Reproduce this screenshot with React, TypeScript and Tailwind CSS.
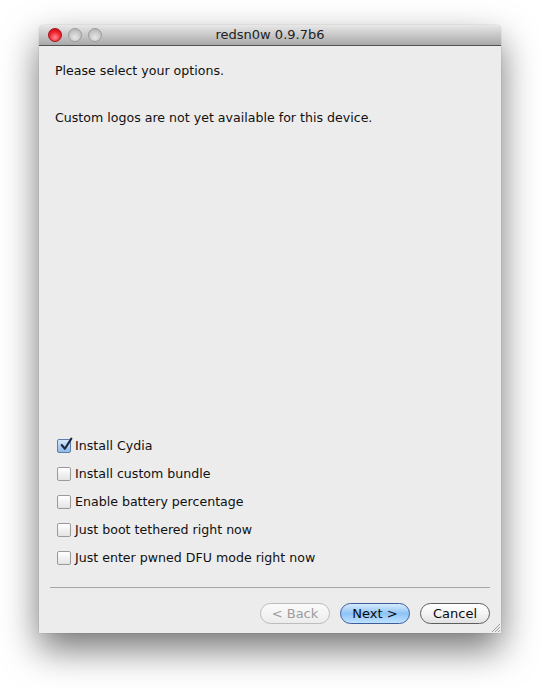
const options = [
  { label: 'Install Cydia', checked: true },
  { label: 'Install custom bundle', checked: false },
  { label: 'Enable battery percentage', checked: false },
  { label: 'Just boot tethered right now', checked: false },
  { label: 'Just enter pwned DFU mode right now', checked: false },
];

const Checkbox = ({ checked }: { checked: boolean }) => (
  <span
    className={`relative flex h-[14px] w-[14px] items-center justify-center rounded-[2px] border ${
      checked
        ? 'border-[#5a7fa8] bg-gradient-to-b from-[#d6e8fa] to-[#8fb8e6]'
        : 'border-[#9a9a9a] bg-gradient-to-b from-[#ffffff] to-[#e4e4e4]'
    }`}
  >
    {checked && (
      <svg viewBox="0 0 14 14" className="absolute -top-[3px] left-[1px] h-[15px] w-[15px]">
        <path d="M2.5 7.5 L5.5 11 L11.5 1.5" fill="none" stroke="#1c2a44" strokeWidth="2" strokeLinecap="round" strokeLinejoin="round" />
      </svg>
    )}
  </span>
);

const Light = ({ red }: { red?: boolean }) => (
  <span
    className={`h-[14px] w-[14px] rounded-full border ${
      red
        ? 'border-[#a8101a] bg-[radial-gradient(circle_at_50%_70%,#ff8a8f_0%,#f0202c_55%,#b40a14_100%)]'
        : 'border-[#9c9c9c] bg-[radial-gradient(circle_at_50%_70%,#e8e8e8_0%,#c4c4c4_60%,#a8a8a8_100%)]'
    }`}
  />
);

const Button = ({ label, variant }: { label: string; variant: 'disabled' | 'default' | 'normal' }) => {
  const styles = {
    disabled: 'border-[#bcbcbc] bg-gradient-to-b from-[#fbfbfb] to-[#ececec] text-[#9c9c9c]',
    default: 'border-[#3d5e9c] bg-gradient-to-b from-[#d8ebfd] via-[#8ec3f5] to-[#bfe2ff] text-[#0a0a0a]',
    normal: 'border-[#5e5e5e] bg-gradient-to-b from-[#ffffff] via-[#f4f4f4] to-[#e2e2e2] text-[#0a0a0a]',
  };
  return (
    <div
      className={`flex h-[21px] w-[70px] items-center justify-center rounded-full border text-[13px] leading-none ${styles[variant]}`}
    >
      {label}
    </div>
  );
};

export default function App() {
  return (
    <div className="h-[688px] w-[540px] bg-white pl-[39px] pt-[25px] font-['DejaVu_Sans',sans-serif]">
      <div className="flex h-[608px] w-[462px] flex-col overflow-hidden rounded-t-[5px] bg-[#ececec] shadow-[0_16px_36px_rgba(0,0,0,0.55),0_0_1px_rgba(0,0,0,0.45)]">
        <div className="relative flex h-[21px] shrink-0 items-center border-b border-[#515151] bg-gradient-to-b from-[#e8e8e8] to-[#a9a9a9]">
          <div className="flex items-center gap-[6px] pl-[9px]">
            <Light red />
            <Light />
            <Light />
          </div>
          <div className="absolute inset-0 flex items-center justify-center text-[13px] text-[#222]">
            redsn0w 0.9.7b6
          </div>
        </div>

        <div className="flex flex-1 flex-col px-[16px] text-[12.6px] text-[#111]">
          <p className="mt-[17px] leading-[16px]">Please select your options.</p>
          <p className="mt-[31px] leading-[16px]">Custom logos are not yet available for this device.</p>

          <div className="mt-auto flex flex-col gap-[14px] pl-[2px]">
            {options.map((o) => (
              <label key={o.label} className="flex h-[14px] items-center gap-[4px]">
                <Checkbox checked={o.checked} />
                <span>{o.label}</span>
              </label>
            ))}
          </div>

          <div className="mx-[-5px] mt-[22px] border-t border-[#a6a6a6]" />

          <div className="relative mr-[-5px] flex justify-end gap-[10px] pb-[9px] pt-[15px]">
            <Button label="< Back" variant="disabled" />
            <Button label="Next >" variant="default" />
            <Button label="Cancel" variant="normal" />
          </div>
        </div>
        <div className="relative h-0">
          <svg viewBox="0 0 10 10" className="absolute bottom-[1px] right-[1px] h-[10px] w-[10px]">
            <path d="M2 10 L10 2 M5 10 L10 5 M8 10 L10 8" stroke="#8a8a8a" strokeWidth="0.8" />
          </svg>
        </div>
      </div>
    </div>
  );
}
